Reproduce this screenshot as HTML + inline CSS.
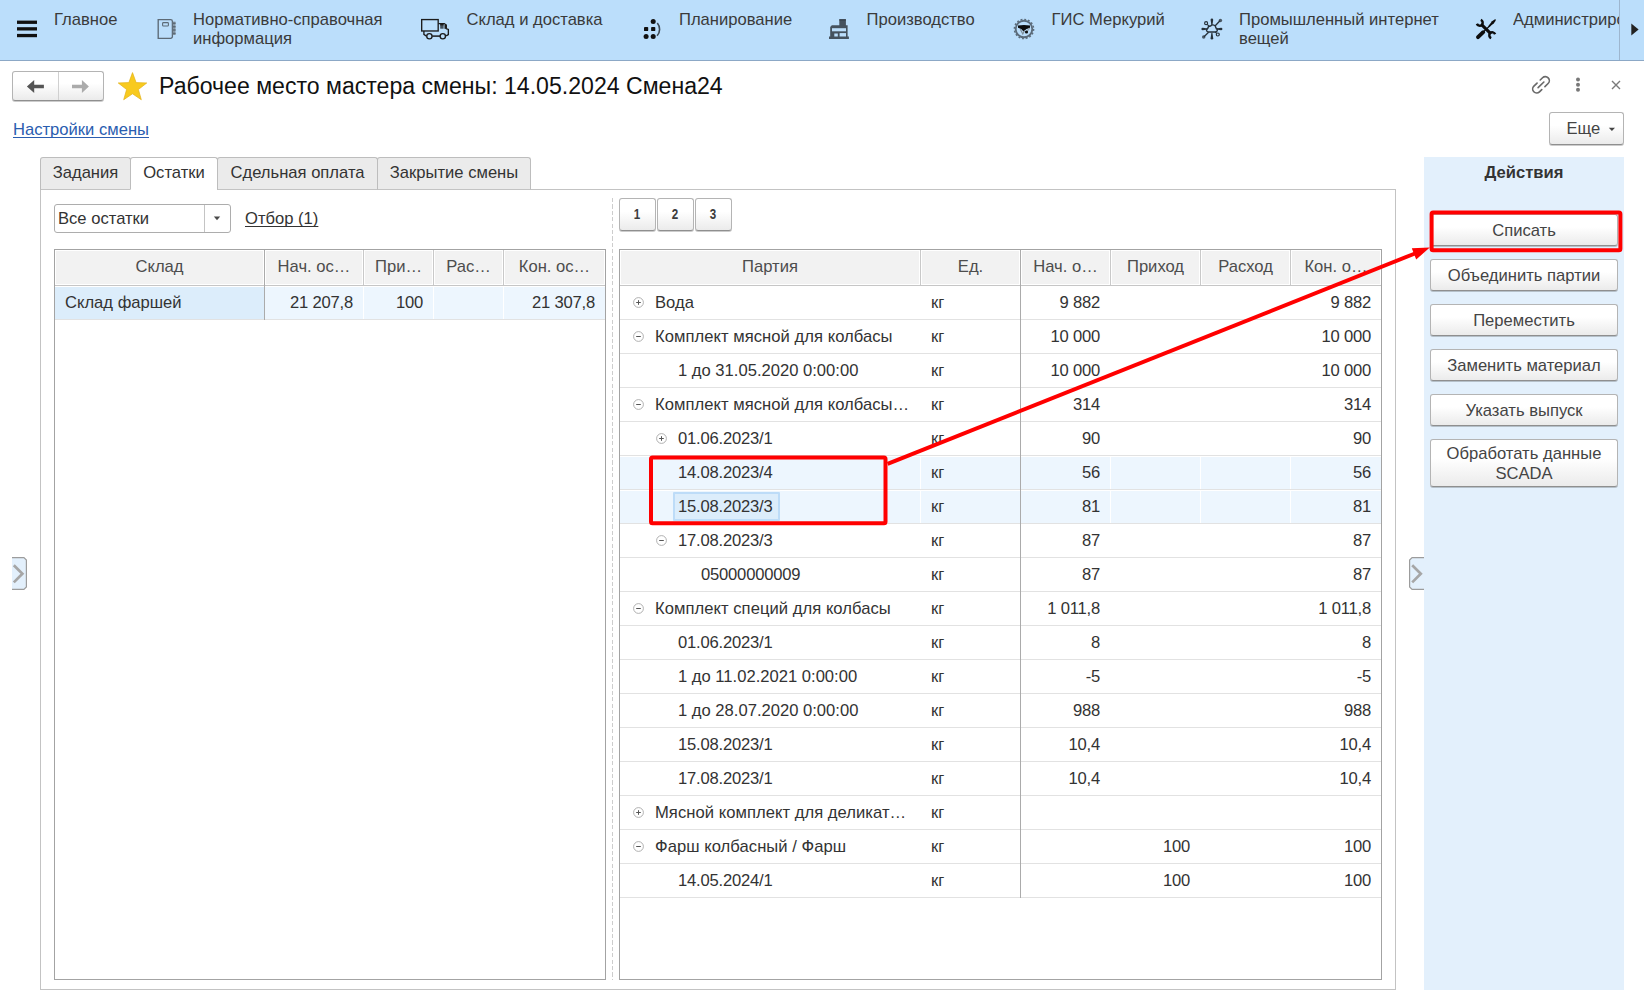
<!DOCTYPE html>
<html lang="ru"><head><meta charset="utf-8"><title>Рабочее место мастера смены</title>
<style>
*{box-sizing:border-box;margin:0;padding:0}
html,body{width:1644px;height:1002px;overflow:hidden;background:#fff}
body{font-family:"Liberation Sans",sans-serif;font-size:16.6px;color:#333;position:relative}
div,span,a{font-family:"Liberation Sans",sans-serif}
.abs{position:absolute}
.t{position:absolute;white-space:nowrap;line-height:20px;color:#333}
svg{position:absolute;overflow:visible}
#nav{position:absolute;left:0;top:0;width:1644px;height:61px;background:#bbdefb;border-bottom:1px solid #8ca8c6}
#nav .t{color:#3a3a3a;line-height:19px}
.btn{position:absolute;border:1px solid #b4b4b4;border-bottom-color:#8f8f8f;border-radius:3px;background:linear-gradient(#ffffff 0%,#ffffff 40%,#ebebeb 100%);box-shadow:0 1px 0 rgba(0,0,0,.20);text-align:center;color:#444;white-space:nowrap}
.tab{position:absolute;top:157px;height:33px;border:1px solid #bdbdbd;border-bottom:1px solid #c3c3c3;background:#ebebeb;border-radius:3px 3px 0 0;text-align:center;line-height:29px;color:#333;white-space:nowrap}
.tab.act{background:#fff;border-bottom:1px solid #fff}
.tbl{position:absolute;border:1px solid #a3a3a3;background:#fff;overflow:hidden}
.hd{position:absolute;top:1px;height:34px;background:#f2f2f2;border:1px solid #fff;color:#4d4d4d;text-align:center;line-height:32px;white-space:nowrap;overflow:hidden}
.hl{position:absolute;top:0;width:1px;height:35px;background:#c9c9c9}
.hb{position:absolute;left:0;top:35px;height:1px;background:#c6c6c6}
.rl{position:absolute;left:0;height:1px;background:#e2e2e2}
.c{position:absolute;height:34px;line-height:34px;white-space:nowrap;color:#333}
.r{text-align:right;letter-spacing:-0.2px}
.dg{letter-spacing:-0.2px}
.cy{letter-spacing:0.045px}
.sel{position:absolute;background:#edf6fe}
</style></head><body>
<div id="nav">
<svg style="left:17px;top:20px" width="20" height="18" viewBox="0 0 20 18"><rect x="0" y="0.6" width="20" height="3.3" fill="#111"/><rect x="0" y="7.2" width="20" height="3.3" fill="#111"/><rect x="0" y="13.9" width="20" height="3.3" fill="#111"/></svg>
<div class="t" style="left:54px;top:10px">Главное</div>
<svg style="left:157px;top:18px" width="20" height="22" viewBox="0 0 20 22" fill="none" stroke="#5c6a76" stroke-width="1.35"><path d="M1.2 1.6H13.6a1.8 1.8 0 0 1 1.8 1.8V18.5a1.8 1.8 0 0 1-1.8 1.8H1.2z"/><rect x="5.6" y="4.6" width="5.8" height="3.4" rx="0.8" stroke-width="1.1"/><path d="M17.2 3.6V17" stroke="#8798a6" stroke-width="2.6"/><path d="M16 5.3h2.6M16 8.7h2.6M16 12.1h2.6M16 15.5h2.6" stroke="#5c6a76" stroke-width="1.5"/></svg>
<div class="t" style="left:193px;top:10px">Нормативно-справочная<br>информация</div>
<svg style="left:421px;top:18px" width="29" height="22" viewBox="0 0 29 22" fill="none" stroke="#1c1c1c" stroke-width="1.35"><rect x="0.68" y="1.58" width="16.5" height="11.4"/><path d="M17.2 5.55h6.1l2 1.5v3.6"/><path d="M25 10.7l2.35 0.7v5.1l-2.2 1.3"/><path d="M2.9 13v3.3l2.6 2"/><path d="M11.2 18.1h8" stroke-width="1.5"/><circle cx="8.4" cy="18.2" r="2.65"/><circle cx="21.8" cy="18.2" r="2.65"/><rect x="19.2" y="6.2" width="3.4" height="4.5" fill="#44525e" stroke="none"/><rect x="19.2" y="5.6" width="3.4" height="1.8" fill="#1c1c1c" stroke="none"/><rect x="23.5" y="6.6" width="1.7" height="4.2" fill="#1c1c1c" stroke="none"/></svg>
<div class="t" style="left:466.5px;top:10px">Склад и доставка</div>
<svg style="left:643px;top:18px" width="19" height="22" viewBox="0 0 19 22"><g fill="#111"><circle cx="10.2" cy="3.4" r="2.5"/><rect x="1" y="8.9" width="4.2" height="4.2" rx="0.9"/><rect x="8.1" y="8.9" width="4.2" height="4.2" rx="0.9"/><circle cx="3.1" cy="18.5" r="2.5"/><circle cx="10.2" cy="18.5" r="2.5"/></g><path d="M14.3 5.1A9.6 9.6 0 0 1 14.1 17.8" fill="none" stroke="#3d4a56" stroke-width="1.6"/></svg>
<div class="t" style="left:679px;top:10px">Планирование</div>
<svg style="left:829px;top:18px" width="21" height="22" viewBox="0 0 21 22"><g fill="#45525e"><rect x="10.3" y="1.3" width="6.6" height="7"/><path d="M1.2 9L2.8 7.2H18.6V19H1.2z"/><rect x="0" y="18.5" width="19.9" height="2.5"/></g><g fill="#bbdefb"><rect x="3" y="10.2" width="14" height="3.1"/><rect x="5.3" y="15.5" width="3.5" height="3"/><rect x="10.6" y="15.1" width="6.4" height="3.4"/></g><rect x="10.3" y="1.3" width="6.6" height="1.2" fill="#333d46"/></svg>
<div class="t" style="left:866.5px;top:10px">Производство</div>
<svg style="left:1013px;top:18px" width="22" height="22" viewBox="0 0 22 22"><circle cx="11" cy="11" r="8.3" fill="none" stroke="#5b6b7a" stroke-width="1.9"/><circle cx="11" cy="11" r="9.6" fill="none" stroke="#5b6b7a" stroke-width="1.5" stroke-dasharray="1.9 1.87"/><path d="M5 7.6Q11 6.6 17 7.6V10Q13.2 10.5 10.5 13.4Q8.6 10.4 5 9.7z" fill="#0c0c0c"/><path d="M7.3 11.2L9.8 16l1.8-3.6" fill="none" stroke="#7f8f9c" stroke-width="1.2"/><path d="M16.6 9.8L13.6 14" stroke="#9aa8b4" stroke-width="1.3"/><circle cx="13.5" cy="14" r="1.55" fill="#0c0c0c"/></svg>
<div class="t" style="left:1051.5px;top:10px">ГИС Меркурий</div>
<svg style="left:1201px;top:18px" width="22" height="22" viewBox="0 0 22 22"><g fill="#26313a"><path d="M9.6 1.8a1.3 1.3 0 0 1 2.6 0L11.4 7.2h-1z"/><path d="M9.6 20.2a1.3 1.3 0 0 0 2.6 0L11.4 14.8h-1z"/><path d="M1.7 9.7a1.3 1.3 0 0 0 0 2.6L7 11.5v-1z"/><path d="M20.1 9.7a1.3 1.3 0 0 1 0 2.6L14.8 11.5v-1z"/><circle cx="19.4" cy="2.4" r="1.75" fill="#4b5a67"/><circle cx="2.7" cy="19" r="1.75" fill="#4b5a67"/></g><g fill="none" stroke="#26313a"><path d="M14 8l5-5.2M7.6 14.3L3 18.7" stroke-width="1.3"/><path d="M6.2 6.3l1.8 1.8M15.7 15.4l-1.6-1.6" stroke-width="1.2"/><circle cx="5.1" cy="5.2" r="1.5" stroke-width="1.2"/><circle cx="16.8" cy="16.5" r="1.5" stroke-width="1.2"/><path d="M7.5 14H14.4a2.1 2.1 0 0 0 0.5-4.1 3 3 0 0 0-5.3-1.9 2.6 2.6 0 0 0-2.8 2.3A1.9 1.9 0 0 0 7.5 14z" stroke-width="1.4"/></g></svg>
<div class="t" style="left:1239px;top:10px">Промышленный интернет<br>вещей</div>
<svg style="left:1475px;top:18px" width="22" height="22" viewBox="0 0 22 22"><g fill="none" stroke="#0d0d0d"><path d="M6.6 6.6L15.4 15.4" stroke-width="3.1"/><path d="M5.8 1.9A3 3 0 1 1 1.9 5.8" stroke-width="2.5"/><path d="M20.1 16.2A3 3 0 1 0 16.2 20.1" stroke-width="2.5"/><path d="M3 19.2L8.2 14.2" stroke-width="3.9" stroke-linecap="round"/><path d="M8 14.2L15.4 7.3" stroke-width="1.2"/></g><path d="M13.2 8.2L17 3.3 20 1.2 20.9 1.5 20.6 2.7 18.7 5.5 14.2 9.1z" fill="#0d0d0d"/></svg>
<div class="t" style="left:1513px;top:10px;width:106px;overflow:hidden">Администрирование</div>
<div class="abs" style="left:1619px;top:0;width:1px;height:60px;background:#9db6cf"></div>
<svg style="left:1631px;top:23px" width="8" height="13" viewBox="0 0 8 13"><path d="M0.3 0.5L7.6 6.5 0.3 12.5z" fill="#222"/></svg>
</div>
<div class="btn" style="left:12px;top:71px;width:92px;height:30px"></div>
<div class="abs" style="left:58px;top:72px;width:1px;height:28px;background:#d0d0d0"></div>
<svg style="left:26px;top:79px" width="20" height="15" viewBox="0 0 20 15"><path d="M0.9 7.5L8.2 1v4.65h9.7v3.7H8.2V14z" fill="#555"/></svg>
<svg style="left:71px;top:79px" width="20" height="15" viewBox="0 0 20 15"><path d="M17.9 7.5L10.9 1v4.65H1v3.7h9.9V14z" fill="#ababab"/></svg>
<svg style="left:0;top:0" width="160" height="110" viewBox="0 0 160 110"><path d="M132.50 72.60L136.14 82.58L146.77 82.96L138.40 89.52L141.32 99.74L132.50 93.80L123.68 99.74L126.60 89.52L118.23 82.96L128.86 82.58z" fill="#f8ca1e" stroke="#e3b21a" stroke-width="0.7"/></svg>
<div class="t" style="left:159px;top:72px;font-size:23.1px;line-height:28px;color:#111">Рабочее место мастера смены: 14.05.2024 Смена24</div>
<svg style="left:0;top:0" width="1644" height="110" viewBox="0 0 1644 110"><g transform="translate(1541 84.8) rotate(-44)" fill="none" stroke="#6a6a6a" stroke-width="1.65" stroke-linecap="round"><path d="M-1.6 -4H-6A4 4 0 0 0 -6 4H-2.8"/><path d="M1.6 4H6A4 4 0 0 0 6 -4H2.8"/><path d="M-4 0H4"/></g></svg>
<svg style="left:1575px;top:77px" width="6" height="16" viewBox="0 0 6 16" fill="#787878"><circle cx="3" cy="2.6" r="2"/><circle cx="3" cy="7.7" r="2"/><circle cx="3" cy="12.7" r="2"/></svg>
<svg style="left:1611px;top:80px" width="10" height="10" viewBox="0 0 10 10"><path d="M1 1l8 8M9 1L1 9" stroke="#7a7a7a" stroke-width="1.4" fill="none"/></svg>
<div class="t" style="left:13px;top:120px;color:#2a5db0;text-decoration:underline;text-underline-offset:2px;text-decoration-skip-ink:none">Настройки смены</div>
<div class="btn" style="left:1549px;top:112px;width:75px;height:33px"></div>
<div class="t" style="left:1566.5px;top:119px;color:#444">Еще</div>
<svg style="left:1608px;top:127px" width="8" height="5" viewBox="0 0 8 5"><path d="M0.8 0.8h6.2L3.9 4z" fill="#444"/></svg>
<div class="abs" style="left:40px;top:189px;width:1356px;height:801px;border:1px solid #c3c3c3;background:#fff"></div>
<div class="tab" style="left:40px;width:91px">Задания</div>
<div class="tab act" style="left:130px;width:88px">Остатки</div>
<div class="tab" style="left:217px;width:161px">Сдельная оплата</div>
<div class="tab" style="left:377px;width:154px">Закрытие смены</div>
<div class="abs" style="left:54px;top:204px;width:177px;height:29px;border:1px solid #adadad;border-radius:3px;background:#fff"></div>
<div class="abs" style="left:204px;top:205px;width:1px;height:27px;background:#c4c4c4"></div>
<div class="t" style="left:58px;top:209px">Все остатки</div>
<svg style="left:213px;top:216px" width="8" height="5" viewBox="0 0 8 5"><path d="M0.8 0.5h6.4L4 4.2z" fill="#4a4a4a"/></svg>
<div class="t" style="left:245px;top:209px;text-decoration:underline;text-underline-offset:2px;text-decoration-skip-ink:none">Отбор (1)</div>
<div class="tbl" style="left:54px;top:249px;width:552px;height:731px">
<div class="hd" style="top:0;left:0px;width:209px;height:35px">Склад</div>
<div class="hd" style="top:0;left:210px;width:98px;height:35px">Нач. ос…</div>
<div class="hd" style="top:0;left:309px;width:69px;height:35px">При…</div>
<div class="hd" style="top:0;left:379px;width:69px;height:35px">Рас…</div>
<div class="hd" style="top:0;left:449px;width:101px;height:35px">Кон. ос…</div>
<div class="hl" style="left:209px"></div>
<div class="hl" style="left:308px"></div>
<div class="hl" style="left:378px"></div>
<div class="hl" style="left:448px"></div>
<div class="hb" style="width:550px"></div>
<div class="sel" style="left:0;top:37px;width:209px;height:32px;background:#dcedfb"></div>
<div class="sel" style="left:210px;top:37px;width:98px;height:32px"></div>
<div class="sel" style="left:309px;top:37px;width:69px;height:32px"></div>
<div class="sel" style="left:379px;top:37px;width:69px;height:32px"></div>
<div class="sel" style="left:449px;top:37px;width:101px;height:32px"></div>
<div class="rl" style="top:69px;width:550px"></div>
<div class="abs" style="left:209px;top:0;width:1px;height:70px;background:#ababab"></div>
<div class="c" style="left:10px;top:36px">Склад фаршей</div>
<div class="c r" style="left:198px;top:36px;width:100px">21 207,8</div>
<div class="c r" style="left:268px;top:36px;width:100px">100</div>
<div class="c r" style="left:440px;top:36px;width:100px">21 307,8</div>
</div>
<div class="abs" style="left:612px;top:198px;width:1px;height:782px;background:repeating-linear-gradient(to bottom,#cdcdcd 0,#cdcdcd 4.3px,transparent 4.3px,transparent 6.4px)"></div>
<div class="btn" style="left:619px;top:198px;width:37px;height:33px;line-height:31px;font-size:14.5px;font-weight:bold;color:#3c3c3c"><span style="display:inline-block;transform:scaleX(.8)">1</span></div>
<div class="btn" style="left:657px;top:198px;width:37px;height:33px;line-height:31px;font-size:14.5px;font-weight:bold;color:#3c3c3c"><span style="display:inline-block;transform:scaleX(.8)">2</span></div>
<div class="btn" style="left:695px;top:198px;width:37px;height:33px;line-height:31px;font-size:14.5px;font-weight:bold;color:#3c3c3c"><span style="display:inline-block;transform:scaleX(.8)">3</span></div>
<div class="tbl" style="left:619px;top:249px;width:763px;height:731px">
<div class="hd" style="top:0;left:0px;width:300px;height:35px">Партия</div>
<div class="hd" style="top:0;left:301px;width:99px;height:35px">Ед.</div>
<div class="hd" style="top:0;left:401px;width:89px;height:35px">Нач. о…</div>
<div class="hd" style="top:0;left:491px;width:89px;height:35px">Приход</div>
<div class="hd" style="top:0;left:581px;width:89px;height:35px">Расход</div>
<div class="hd" style="top:0;left:671px;width:90px;height:35px">Кон. о…</div>
<div class="hl" style="left:300px"></div>
<div class="hl" style="left:400px"></div>
<div class="hl" style="left:490px"></div>
<div class="hl" style="left:580px"></div>
<div class="hl" style="left:670px"></div>
<div class="hb" style="width:761px"></div>
<div class="rl" style="top:69px;width:761px"></div>
<svg style="left:13px;top:47px" width="11" height="11" viewBox="0 0 11 11"><circle cx="5.5" cy="5.5" r="4.9" fill="#fff" stroke="#a8a8a8" stroke-width="0.9"/><path d="M3.2 5.5h4.6M5.5 3.2v4.6" stroke="#555" stroke-width="1" fill="none"/></svg>
<div class="c cy" style="left:35px;top:36px">Вода</div>
<div class="c" style="left:311px;top:36px">кг</div>
<div class="c r" style="left:380px;top:36px;width:100px">9 882</div>
<div class="c r" style="left:651px;top:36px;width:100px">9 882</div>
<div class="rl" style="top:103px;width:761px"></div>
<svg style="left:13px;top:81px" width="11" height="11" viewBox="0 0 11 11"><circle cx="5.5" cy="5.5" r="4.9" fill="#fff" stroke="#a8a8a8" stroke-width="0.9"/><path d="M3.2 5.5h4.6" stroke="#555" stroke-width="1" fill="none"/></svg>
<div class="c cy" style="left:35px;top:70px">Комплект мясной для колбасы</div>
<div class="c" style="left:311px;top:70px">кг</div>
<div class="c r" style="left:380px;top:70px;width:100px">10 000</div>
<div class="c r" style="left:651px;top:70px;width:100px">10 000</div>
<div class="rl" style="top:137px;width:761px"></div>
<div class="c " style="left:58px;top:104px">1 до 31.05.2020 0:00:00</div>
<div class="c" style="left:311px;top:104px">кг</div>
<div class="c r" style="left:380px;top:104px;width:100px">10 000</div>
<div class="c r" style="left:651px;top:104px;width:100px">10 000</div>
<div class="rl" style="top:171px;width:761px"></div>
<svg style="left:13px;top:149px" width="11" height="11" viewBox="0 0 11 11"><circle cx="5.5" cy="5.5" r="4.9" fill="#fff" stroke="#a8a8a8" stroke-width="0.9"/><path d="M3.2 5.5h4.6" stroke="#555" stroke-width="1" fill="none"/></svg>
<div class="c cy" style="left:35px;top:138px">Комплект мясной для колбасы…</div>
<div class="c" style="left:311px;top:138px">кг</div>
<div class="c r" style="left:380px;top:138px;width:100px">314</div>
<div class="c r" style="left:651px;top:138px;width:100px">314</div>
<div class="rl" style="top:205px;width:761px"></div>
<svg style="left:36px;top:183px" width="11" height="11" viewBox="0 0 11 11"><circle cx="5.5" cy="5.5" r="4.9" fill="#fff" stroke="#a8a8a8" stroke-width="0.9"/><path d="M3.2 5.5h4.6M5.5 3.2v4.6" stroke="#555" stroke-width="1" fill="none"/></svg>
<div class="c dg" style="left:58px;top:172px">01.06.2023/1</div>
<div class="c" style="left:311px;top:172px">кг</div>
<div class="c r" style="left:380px;top:172px;width:100px">90</div>
<div class="c r" style="left:651px;top:172px;width:100px">90</div>
<div class="sel" style="left:0px;top:207px;width:300px;height:32px"></div>
<div class="sel" style="left:301px;top:207px;width:99px;height:32px"></div>
<div class="sel" style="left:401px;top:207px;width:89px;height:32px"></div>
<div class="sel" style="left:491px;top:207px;width:89px;height:32px"></div>
<div class="sel" style="left:581px;top:207px;width:89px;height:32px"></div>
<div class="sel" style="left:671px;top:207px;width:90px;height:32px"></div>
<div class="rl" style="top:239px;width:761px"></div>
<div class="c dg" style="left:58px;top:206px">14.08.2023/4</div>
<div class="c" style="left:311px;top:206px">кг</div>
<div class="c r" style="left:380px;top:206px;width:100px">56</div>
<div class="c r" style="left:651px;top:206px;width:100px">56</div>
<div class="sel" style="left:0px;top:241px;width:300px;height:32px"></div>
<div class="sel" style="left:301px;top:241px;width:99px;height:32px"></div>
<div class="sel" style="left:401px;top:241px;width:89px;height:32px"></div>
<div class="sel" style="left:491px;top:241px;width:89px;height:32px"></div>
<div class="sel" style="left:581px;top:241px;width:89px;height:32px"></div>
<div class="sel" style="left:671px;top:241px;width:90px;height:32px"></div>
<div class="rl" style="top:273px;width:761px"></div>
<div class="abs" style="left:53px;top:242px;width:107px;height:29px;background:#dcedfb;border:2px solid #bddcf8;border-radius:1px"></div>
<div class="c dg" style="left:58px;top:240px">15.08.2023/3</div>
<div class="c" style="left:311px;top:240px">кг</div>
<div class="c r" style="left:380px;top:240px;width:100px">81</div>
<div class="c r" style="left:651px;top:240px;width:100px">81</div>
<div class="rl" style="top:307px;width:761px"></div>
<svg style="left:36px;top:285px" width="11" height="11" viewBox="0 0 11 11"><circle cx="5.5" cy="5.5" r="4.9" fill="#fff" stroke="#a8a8a8" stroke-width="0.9"/><path d="M3.2 5.5h4.6" stroke="#555" stroke-width="1" fill="none"/></svg>
<div class="c dg" style="left:58px;top:274px">17.08.2023/3</div>
<div class="c" style="left:311px;top:274px">кг</div>
<div class="c r" style="left:380px;top:274px;width:100px">87</div>
<div class="c r" style="left:651px;top:274px;width:100px">87</div>
<div class="rl" style="top:341px;width:761px"></div>
<div class="c dg" style="left:81px;top:308px">05000000009</div>
<div class="c" style="left:311px;top:308px">кг</div>
<div class="c r" style="left:380px;top:308px;width:100px">87</div>
<div class="c r" style="left:651px;top:308px;width:100px">87</div>
<div class="rl" style="top:375px;width:761px"></div>
<svg style="left:13px;top:353px" width="11" height="11" viewBox="0 0 11 11"><circle cx="5.5" cy="5.5" r="4.9" fill="#fff" stroke="#a8a8a8" stroke-width="0.9"/><path d="M3.2 5.5h4.6" stroke="#555" stroke-width="1" fill="none"/></svg>
<div class="c cy" style="left:35px;top:342px">Комплект специй для колбасы</div>
<div class="c" style="left:311px;top:342px">кг</div>
<div class="c r" style="left:380px;top:342px;width:100px">1 011,8</div>
<div class="c r" style="left:651px;top:342px;width:100px">1 011,8</div>
<div class="rl" style="top:409px;width:761px"></div>
<div class="c dg" style="left:58px;top:376px">01.06.2023/1</div>
<div class="c" style="left:311px;top:376px">кг</div>
<div class="c r" style="left:380px;top:376px;width:100px">8</div>
<div class="c r" style="left:651px;top:376px;width:100px">8</div>
<div class="rl" style="top:443px;width:761px"></div>
<div class="c " style="left:58px;top:410px">1 до 11.02.2021 0:00:00</div>
<div class="c" style="left:311px;top:410px">кг</div>
<div class="c r" style="left:380px;top:410px;width:100px">-5</div>
<div class="c r" style="left:651px;top:410px;width:100px">-5</div>
<div class="rl" style="top:477px;width:761px"></div>
<div class="c " style="left:58px;top:444px">1 до 28.07.2020 0:00:00</div>
<div class="c" style="left:311px;top:444px">кг</div>
<div class="c r" style="left:380px;top:444px;width:100px">988</div>
<div class="c r" style="left:651px;top:444px;width:100px">988</div>
<div class="rl" style="top:511px;width:761px"></div>
<div class="c dg" style="left:58px;top:478px">15.08.2023/1</div>
<div class="c" style="left:311px;top:478px">кг</div>
<div class="c r" style="left:380px;top:478px;width:100px">10,4</div>
<div class="c r" style="left:651px;top:478px;width:100px">10,4</div>
<div class="rl" style="top:545px;width:761px"></div>
<div class="c dg" style="left:58px;top:512px">17.08.2023/1</div>
<div class="c" style="left:311px;top:512px">кг</div>
<div class="c r" style="left:380px;top:512px;width:100px">10,4</div>
<div class="c r" style="left:651px;top:512px;width:100px">10,4</div>
<div class="rl" style="top:579px;width:761px"></div>
<svg style="left:13px;top:557px" width="11" height="11" viewBox="0 0 11 11"><circle cx="5.5" cy="5.5" r="4.9" fill="#fff" stroke="#a8a8a8" stroke-width="0.9"/><path d="M3.2 5.5h4.6M5.5 3.2v4.6" stroke="#555" stroke-width="1" fill="none"/></svg>
<div class="c cy" style="left:35px;top:546px">Мясной комплект для деликат…</div>
<div class="c" style="left:311px;top:546px">кг</div>
<div class="rl" style="top:613px;width:761px"></div>
<svg style="left:13px;top:591px" width="11" height="11" viewBox="0 0 11 11"><circle cx="5.5" cy="5.5" r="4.9" fill="#fff" stroke="#a8a8a8" stroke-width="0.9"/><path d="M3.2 5.5h4.6" stroke="#555" stroke-width="1" fill="none"/></svg>
<div class="c cy" style="left:35px;top:580px">Фарш колбасный / Фарш</div>
<div class="c" style="left:311px;top:580px">кг</div>
<div class="c r" style="left:470px;top:580px;width:100px">100</div>
<div class="c r" style="left:651px;top:580px;width:100px">100</div>
<div class="rl" style="top:647px;width:761px"></div>
<div class="c dg" style="left:58px;top:614px">14.05.2024/1</div>
<div class="c" style="left:311px;top:614px">кг</div>
<div class="c r" style="left:470px;top:614px;width:100px">100</div>
<div class="c r" style="left:651px;top:614px;width:100px">100</div>
<div class="abs" style="left:400px;top:0;width:1px;height:648px;background:#ababab"></div>
</div>
<svg style="left:12px;top:557px" width="15" height="33" viewBox="0 0 15 33"><path d="M0 0.6h11.9l2.5 2.5v26.8l-2.5 2.5H0" fill="#e3f0fc" stroke="#9c9c9c" stroke-width="1.2"/><path d="M1.8 8.2l8.6 8.6-8.6 8.6" fill="none" stroke="#a6a6a6" stroke-width="2.7"/></svg>
<div class="abs" style="left:1424px;top:157px;width:200px;height:833px;background:#e3f0fc"></div>
<svg style="left:1409px;top:557px" width="15" height="33" viewBox="0 0 15 33"><path d="M15 0.6H3.1L0.6 3.1v26.8l2.5 2.5H15" fill="#e3f0fc" stroke="#9c9c9c" stroke-width="1.2"/><path d="M3.2 8.2l8.6 8.6-8.6 8.6" fill="none" stroke="#a6a6a6" stroke-width="2.7"/></svg>
<div class="t" style="left:1424px;top:163px;width:200px;text-align:center;font-weight:bold;color:#333">Действия</div>
<div class="btn" style="left:1430px;top:214px;width:188px;height:32px;line-height:31px">Списать</div>
<div class="btn" style="left:1430px;top:259px;width:188px;height:32px;line-height:31px">Объединить партии</div>
<div class="btn" style="left:1430px;top:304px;width:188px;height:32px;line-height:31px">Переместить</div>
<div class="btn" style="left:1430px;top:349px;width:188px;height:32px;line-height:31px">Заменить материал</div>
<div class="btn" style="left:1430px;top:394px;width:188px;height:32px;line-height:31px">Указать выпуск</div>
<div class="btn" style="left:1430px;top:439px;width:188px;height:48px;line-height:20px;padding-top:4px;white-space:normal">Обработать данные<br>SCADA</div>
<svg style="left:0;top:0;z-index:20" width="1644" height="1002" viewBox="0 0 1644 1002"><g fill="none" stroke="#f00" stroke-width="4" stroke-linejoin="round">
<rect x="1431.6" y="212.4" width="188.8" height="37.9" rx="1.5"/>
<rect x="651" y="457.6" width="234.5" height="65.7" rx="1.5"/>
<path d="M887.6 463.9L1415 253.5" stroke-linecap="butt"/>
</g><path d="M1429.8 247.5L1411.8 248.3L1416.2 259.5z" fill="#f00"/></svg>
</body></html>
